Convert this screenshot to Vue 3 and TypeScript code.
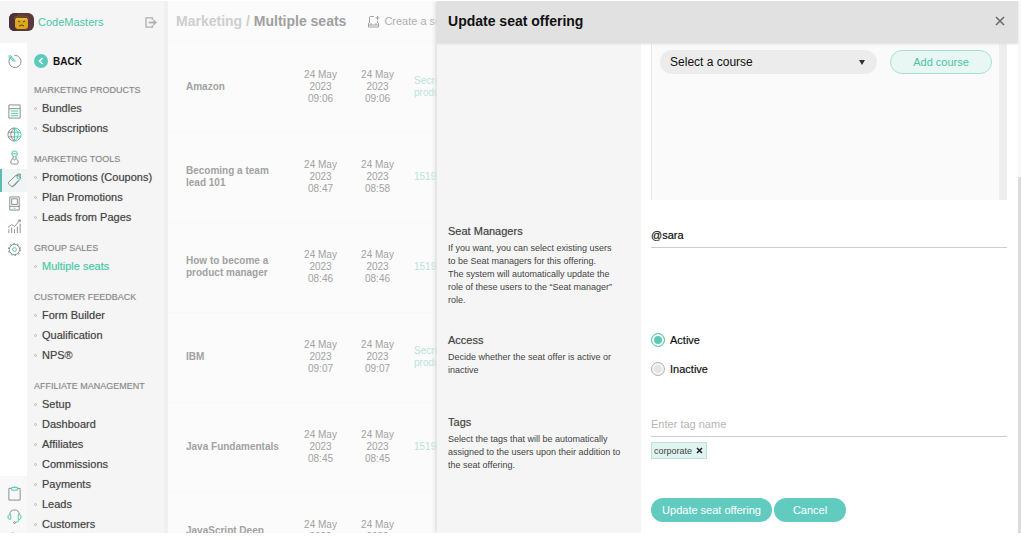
<script setup lang="ts">
import { ref } from 'vue'

interface MenuSection {
  title: string
  items: string[]
}
interface SeatRow {
  name: string[]
  created: string[]
  updated: string[]
  product: string[]
}

const sections: MenuSection[] = [
  { title: 'MARKETING PRODUCTS', items: ['Bundles', 'Subscriptions'] },
  { title: 'MARKETING TOOLS', items: ['Promotions (Coupons)', 'Plan Promotions', 'Leads from Pages'] },
  { title: 'GROUP SALES', items: ['Multiple seats'] },
  { title: 'CUSTOMER FEEDBACK', items: ['Form Builder', 'Qualification', 'NPS®'] },
  {
    title: 'AFFILIATE MANAGEMENT',
    items: ['Setup', 'Dashboard', 'Affiliates', 'Commissions', 'Payments', 'Leads', 'Customers'],
  },
]
const current = 'Multiple seats'

const at = (time: string): string[] => ['24 May', '2023', time]
const rows: SeatRow[] = [
  { name: ['Amazon'], created: at('09:06'), updated: at('09:06'), product: ['Secret', 'product'] },
  { name: ['Becoming a team', 'lead 101'], created: at('08:47'), updated: at('08:58'), product: ['1519'] },
  { name: ['How to become a', 'product manager'], created: at('08:46'), updated: at('08:46'), product: ['1519'] },
  { name: ['IBM'], created: at('09:07'), updated: at('09:07'), product: ['Secret', 'product'] },
  { name: ['Java Fundamentals'], created: at('08:45'), updated: at('08:45'), product: ['1519'] },
  { name: ['JavaScript Deep', 'Dive'], created: at('08:44'), updated: at('08:44'), product: [] },
]

const manager = ref('@sara')
const access = ref('active')
const tagName = ref('')
const course = ref('')
const tags = ref<string[]>(['corporate'])

function removeTag(tag: string): void {
  tags.value = tags.value.filter((t) => t !== tag)
}
</script>

<template>
  <div class="page">
    <aside class="side">
      <header class="brand">
        <svg class="avatar" width="25" height="18" viewBox="0 0 25 18" aria-hidden="true">
          <rect width="25" height="18" rx="6" fill="#5c3a3c" />
          <path d="M0 6q0-6 6-6h2v18H6q-6 0-6-6z" fill="#4a3038" />
          <rect x="6" y="3" width="13" height="13" rx="3" fill="#d9a81c" />
          <path d="M5 4q7-4 15 0v2H5z" fill="#6b4a2a" />
          <path d="M7 5h11v2H7z" fill="#e3b93a" />
          <path d="M9 8l2 1M16 8l-2 1M10 13q2.500-2 5 0" stroke="#5a3d10" fill="none" />
        </svg>
        <a class="brand-name" href="#">CodeMasters</a>
        <button class="plain" aria-label="Log out">
          <svg width="13" height="11" viewBox="0 0 14 12" fill="none" stroke="#b0b0b0" stroke-width="1.500">
            <path d="M8 3V1H1v10h7V9" />
            <path d="M4 6h6" stroke-width="2" />
            <path d="M9 2.500L13 6 9 9.500z" fill="#b0b0b0" stroke="none" />
          </svg>
        </button>
      </header>

      <div class="side-body">
        <nav class="rail" aria-label="Main">
          <a class="rail-item first" href="#" aria-label="Overview">
            <svg viewBox="0 0 16 16"><path d="M5 2.500A6.500 6.500 0 1 0 8 1.500" /><path class="g" d="M2 1.500l7 7M3 1l5.500 6M1.500 3L7 8" /></svg>
          </a>
          <a class="rail-item" href="#" aria-label="Courses">
            <svg viewBox="0 0 16 16"><path d="M2 1h12v14H2zM2 5h12" /><path class="g" d="M4 7.500h8M4 10h8M4 12.500h8" /></svg>
          </a>
          <a class="rail-item" href="#" aria-label="Website">
            <svg viewBox="0 0 16 16"><path d="M8 1a7 7 0 0 0 0 14M8 1Q4 4 4 8t4 7M1.500 5.500H8M1.500 10.500H8" /><path class="g" d="M8 1a7 7 0 0 1 0 14M8 1q4 3 4 7t-4 7M8 1v14M8 5.500h6.500M8 10.500h6.500" /></svg>
          </a>
          <a class="rail-item" href="#" aria-label="Users">
            <svg viewBox="0 0 16 16"><circle class="g" cx="8" cy="4" r="3" /><path class="g" d="M5 4h6" /><path d="M6.500 7v2Q4 10 4 13q0 2 2 2h4q2 0 2-2 0-3-2.500-4V7M6.500 9L8 11l1.500-2" /></svg>
          </a>
          <a class="rail-item active" href="#" aria-label="Marketing">
            <svg viewBox="0 0 16 16"><path d="M1.500 10L9 3l5-1 .5 4L8 13.500q-2 2-4.500 0t-2-3.500z" /><path d="M5 15l7-7M9 3q3-3 6-1.500" /><circle class="g" cx="12" cy="4.500" r="1.500" /></svg>
          </a>
          <a class="rail-item" href="#" aria-label="Mobile app">
            <svg viewBox="0 0 16 16"><path d="M3 1h10v14H3zM3 11h10M5 3h6v6H5z" /><path class="g" d="M7 13h2" /></svg>
          </a>
          <a class="rail-item" href="#" aria-label="Reports">
            <svg viewBox="0 0 16 16"><path d="M2 15v-4M5 15V9M8 15v-4M11 15V8M14 15V5" /><path d="M1 9l4-3 3 2 6-7M11.500 1.500L14 1v2.500" /></svg>
          </a>
          <a class="rail-item" href="#" aria-label="Settings">
            <svg viewBox="0 0 16 16"><circle cx="8" cy="8" r="5.500" /><circle cx="8" cy="8" r="6.500" stroke-dasharray="2 2.080" /><circle class="g" cx="8" cy="8" r="2" /></svg>
          </a>
          <div class="rail-foot">
            <a class="rail-item" href="#" aria-label="Tasks">
              <svg viewBox="0 0 16 16"><path d="M5 2.500H2V15h12V2.500h-3" /><path class="g" d="M5 1.500h6v3H5zM7 1.500Q8-.5 9 1.500" /></svg>
            </a>
            <a class="rail-item" href="#" aria-label="Support">
              <svg viewBox="0 0 16 16"><path d="M3 6q0-5 5-5t5 5" /><path class="g" d="M4 6H2.500Q1 6 1 8.500T2.500 11H4zM12 6h1.500Q15 6 15 8.500T13.500 11H12zM13 11q0 3-4 3.500" /><circle cx="8" cy="14.500" r="1" /></svg>
            </a>
            <a class="rail-item" href="#" aria-label="Account">
              <svg viewBox="0 0 16 16"><circle class="g" cx="6" cy="5" r="4" /></svg>
            </a>
          </div>
        </nav>

        <nav class="menu" aria-label="Marketing">
          <button class="plain back">
            <svg width="14" height="14" viewBox="0 0 14 14" aria-hidden="true">
              <circle cx="7" cy="7" r="7" fill="#5ccabb" />
              <path d="M8.500 4L5.500 7l3 3" fill="none" stroke="#fff" stroke-width="1.500" />
            </svg>
            BACK
          </button>
          <section v-for="s in sections" :key="s.title" class="group">
            <h3>{{ s.title }}</h3>
            <ul>
              <li v-for="item in s.items" :key="item">
                <a href="#" :class="{ current: item === current }">{{ item }}</a>
              </li>
            </ul>
          </section>
        </nav>
      </div>
    </aside>

    <main class="main">
      <header class="top">
        <h1><span>Marketing /</span> Multiple seats</h1>
        <button class="plain create">
          <svg width="13" height="13" viewBox="0 0 13 13" fill="none" stroke="#a2a2a2" aria-hidden="true">
            <path d="M7 1.500H3.500q-1 0-1 1V8M10.500 6v2M1.500 8v4h10V8M1.500 10h10M4 10V8M9 10V8" />
            <path d="M10.500 1v4M8.500 3h4" />
          </svg>
          <span>Create a seat offering</span>
        </button>
      </header>
      <table>
        <tbody>
          <tr v-for="(r, i) in rows" :key="i">
            <th scope="row"><div v-for="l in r.name" :key="l">{{ l }}</div></th>
            <td><div v-for="l in r.created" :key="l">{{ l }}</div></td>
            <td><div v-for="l in r.updated" :key="l">{{ l }}</div></td>
            <td class="product"><a v-for="l in r.product" :key="l" href="#">{{ l }}</a></td>
          </tr>
        </tbody>
      </table>
    </main>

    <section class="drawer" role="dialog" aria-labelledby="drawer-title">
      <div class="drawer-main">
        <header class="drawer-head">
          <h2 id="drawer-title">Update seat offering</h2>
          <button class="plain" aria-label="Close">
            <svg width="10" height="10" viewBox="0 0 10 10" stroke="#666" stroke-width="1.500"><path d="M1 1l8 8M9 1L1 9" /></svg>
          </button>
        </header>

        <form class="form" @submit.prevent>
          <div class="row courses">
            <div class="about"></div>
            <div class="field">
              <div class="course-box">
                <div class="select-wrap">
                  <select v-model="course" aria-label="Course">
                    <option value="">Select a course</option>
                  </select>
                  <svg width="6" height="5" viewBox="0 0 6 5" aria-hidden="true"><path d="M0 0h6L3 5z" fill="#333" /></svg>
                </div>
                <button type="button" class="add">Add course</button>
              </div>
            </div>
          </div>

          <div class="row managers">
            <div class="about">
              <label for="managers">Seat Managers</label>
              <p>
                If you want, you can select existing users<br />to be Seat managers for this offering.<br />The
                system will automatically update the<br />role of these users to the “Seat manager”<br />role.
              </p>
            </div>
            <div class="field">
              <input id="managers" v-model="manager" class="line strong" type="text" />
            </div>
          </div>

          <div class="row access" role="radiogroup" aria-labelledby="access-label">
            <div class="about">
              <span id="access-label" class="label">Access</span>
              <p>Decide whether the seat offer is active or<br />inactive</p>
            </div>
            <div class="field radios">
              <label><input v-model="access" type="radio" name="access" value="active" />Active</label>
              <label><input v-model="access" type="radio" name="access" value="inactive" />Inactive</label>
            </div>
          </div>

          <div class="row last">
            <div class="about">
              <label for="tags">Tags</label>
              <p>Select the tags that will be automatically<br />assigned to the users upon their addition to<br />the seat offering.</p>
            </div>
            <div class="field">
              <input id="tags" v-model="tagName" class="line" type="text" placeholder="Enter tag name" />
              <div class="tags">
                <span v-for="t in tags" :key="t" class="tag">
                  {{ t }}
                  <button type="button" class="plain" :aria-label="'Remove ' + t" @click="removeTag(t)">
                    <svg width="7" height="7" viewBox="0 0 7 7" stroke="#222" stroke-width="1.500"><path d="M1 1l5 5M6 1L1 6" /></svg>
                  </button>
                </span>
              </div>
              <div class="actions">
                <button type="submit">Update seat offering</button>
                <button type="button" class="cancel">Cancel</button>
              </div>
            </div>
          </div>
        </form>
      </div>
      <div class="scroll"><div class="thumb"></div></div>
    </section>
  </div>
</template>

<style>
body {
  background: #fff;
}
</style>

<style scoped>
.page,
.page * {
  box-sizing: border-box;
}
.page {
  position: relative;
  display: flex;
  height: 100vh;
  overflow: hidden;
  border-top: 1px solid #fff;
  border-bottom: 6px solid #fff;
  font-family: 'Liberation Sans', Arial, sans-serif;
  font-size: 11px;
  color: #444;
}
h1, h2, h3, p, ul {
  margin: 0;
  padding: 0;
}
a {
  color: inherit;
  text-decoration: none;
}
button,
input,
select {
  font: inherit;
  color: inherit;
}
.plain {
  display: flex;
  align-items: center;
  padding: 0;
  border: 0;
  background: none;
}
svg {
  display: block;
  flex: none;
}

.side {
  display: flex;
  flex: none;
  flex-direction: column;
  width: 168px;
  border-right: 4px solid #f0f0f0;
  background: #f5f5f5;
}
.brand {
  display: flex;
  flex: none;
  align-items: center;
  height: 42px;
  padding: 0 6px 0 9px;
}
.brand-name {
  flex: 1;
  margin-left: 4px;
  color: #4dc5a8;
}
.side-body {
  display: flex;
  flex: 1;
  min-height: 0;
}
.rail {
  display: flex;
  flex: none;
  flex-direction: column;
  width: 27px;
  background: #fff;
}
.rail-item {
  display: flex;
  flex: none;
  align-items: center;
  justify-content: center;
  height: 23px;
  border-left: 2px solid transparent;
}
.rail-item.first {
  height: 36px;
  margin-bottom: 21px;
}
.rail-item.active {
  border-color: #5cbcb0;
  background: #eef5f4;
}
.rail-item svg {
  width: 15px;
  height: 15px;
  fill: none;
  stroke: #858a8a;
}
.rail-item .g {
  stroke: #4cc9ab;
}
.rail-foot {
  flex: none;
  height: 57px;
  margin-top: auto;
  padding-top: 6px;
  overflow: hidden;
  background: #f8f8f8;
}
.menu {
  flex: 1;
  padding: 8px 0 0 7px;
  overflow: hidden;
}
.back {
  gap: 5px;
  height: 20px;
  margin-bottom: 12px;
  color: #111;
  font-weight: 700;
  font-size: 10px;
}
.group {
  padding-bottom: 14px;
}
.group h3 {
  height: 14px;
  line-height: 14px;
  font-size: 9px;
  font-weight: 400;
  color: #8a8a8a;
  text-shadow: 0 0 1px #c4c4c4;
  white-space: nowrap;
}
.group ul {
  padding-top: 1px;
  list-style: none;
}
.group li {
  display: flex;
  align-items: center;
  gap: 5px;
  height: 20px;
  white-space: nowrap;
  text-shadow: 0 0 1px #aaa;
}
.group li::before {
  width: 3px;
  height: 3px;
  border: 1px solid #bbb;
  border-radius: 50%;
  content: '';
  box-sizing: border-box;
}
.group .current {
  color: #4cc9a6;
  text-shadow: 0 0 1px #a5e2d3;
}

.main {
  flex: 1;
  min-width: 0;
  margin-right: calc(57% + 2px);
  overflow: hidden;
  background: #fbfbfb;
}
.top {
  display: flex;
  align-items: center;
  gap: 21px;
  height: 41px;
  padding-left: 8px;
  border-bottom: 1px solid #f8f8f8;
  white-space: nowrap;
}
h1 {
  flex: none;
  font-size: 14px;
  color: #a0a0a0;
}
h1 span {
  color: #cecece;
}
.create {
  flex: 1;
  gap: 4px;
  min-width: 0;
  color: #b0b0b0;
}
.create span {
  min-width: 0;
  overflow: hidden;
}
table {
  width: 100%;
  border-collapse: collapse;
  table-layout: fixed;
  font-size: 10px;
  line-height: 12px;
  color: #a2a2a2;
}
tr {
  height: 90px;
  border-bottom: 1px solid #f8f8f8;
}
th {
  width: 124px;
  padding: 0 0 0 18px;
  text-align: left;
}
td {
  width: 57px;
  padding: 0;
  text-align: center;
}
.product {
  width: auto;
  padding-left: 8px;
  overflow: hidden;
  text-align: left;
  color: #b9e3da;
}
.product a {
  display: block;
}

.drawer {
  position: absolute;
  top: 0;
  right: 0;
  bottom: 0;
  display: flex;
  width: calc(57% + 2px);
  background: #fff;
  box-shadow: -2px 0 4px #dedede;
}
.drawer-main {
  display: flex;
  flex: 1;
  flex-direction: column;
}
.drawer-head {
  display: flex;
  flex: none;
  z-index: 1;
  align-items: center;
  justify-content: space-between;
  height: 42px;
  padding: 0 13px 2px 11px;
  background: #e1e1e1;
  box-shadow: 0 1px 2px #ddd;
}
h2 {
  font-size: 14px;
  color: #111;
}
.scroll {
  display: flex;
  flex-direction: column;
  justify-content: flex-end;
  width: 3px;
  background: #f8f8f8;
}
.thumb {
  height: 67%;
  background: #dcdcdc;
}
.form {
  display: flex;
  flex: 1;
  flex-direction: column;
}
.row {
  display: grid;
  grid-template-columns: 204px 1fr;
}
.last {
  flex: 1;
}
.about {
  padding: 8px 0 17px 11px;
  background: #f5f5f5;
}
.access .about {
  padding-bottom: 29px;
}
.about label,
.about .label {
  display: block;
  height: 16px;
  margin-bottom: 3px;
  line-height: 16px;
  text-shadow: 0 0 1px #aaa;
}
.about p {
  font-size: 9px;
  line-height: 13px;
  white-space: nowrap;
}
.field {
  padding: 8px 11px 0 10px;
}
.courses .about,
.courses .field {
  padding-top: 0;
  padding-bottom: 15px;
}
.course-box {
  display: flex;
  align-items: flex-start;
  gap: 13px;
  height: 157px;
  padding: 7px 7px 0 8px;
  border-right: 8px solid #eee;
  border-left: 1px solid #e8e8e8;
  background: #fafafa;
}
.select-wrap {
  display: flex;
  flex: 1;
  align-items: center;
  height: 24px;
  padding-right: 12px;
  border-radius: 12px;
  background: #ececec;
}
select {
  flex: 1;
  height: 24px;
  padding: 0 0 0 10px;
  border: 0;
  appearance: none;
  background: none;
  color: #111;
  font-size: 12px;
}
.add {
  width: 102px;
  height: 24px;
  padding: 0;
  border: 1px solid #a5e2d3;
  border-radius: 12px;
  background: #e8f7f4;
  color: #4cc3a6;
}
.line {
  display: block;
  width: 100%;
  height: 25px;
  padding: 0;
  border: 0;
  border-bottom: 1px solid #ccc;
  outline: 0;
  background: none;
}
.line::placeholder {
  color: #b5b5b5;
}
.strong {
  color: #111;
  text-shadow: 0 0 1px #999;
}
.radios {
  display: flex;
  flex-direction: column;
  gap: 14px;
}
.radios label {
  display: flex;
  align-items: center;
  gap: 5px;
  height: 15px;
  color: #111;
  text-shadow: 0 0 1px #aaa;
}
.radios input {
  width: 14px;
  height: 14px;
  margin: 0;
  border: 1px solid #b5b5b5;
  border-radius: 50%;
  appearance: none;
  background: #e4e4e4;
  box-shadow: inset 0 0 0 2px #f5f5f5;
}
.radios input:checked {
  border-color: #5cc9b3;
  background: #5cc9b3;
  box-shadow: inset 0 0 0 2px #fff;
}
.last .field {
  padding-top: 6px;
}
.tags {
  display: flex;
  height: 17px;
  margin: 5px 0 39px;
}
.tag {
  display: flex;
  align-items: center;
  gap: 4px;
  padding: 0 3px 0 2px;
  border: 1px solid #bfe3da;
  background: #e0f4ef;
  font-size: 9px;
}
.actions {
  display: flex;
  gap: 2px;
}
.actions button {
  width: 121px;
  height: 24px;
  padding: 0;
  border: 0;
  border-radius: 12px;
  background: #62cbbf;
  color: #fff;
}
.actions .cancel {
  width: 72px;
}
</style>
